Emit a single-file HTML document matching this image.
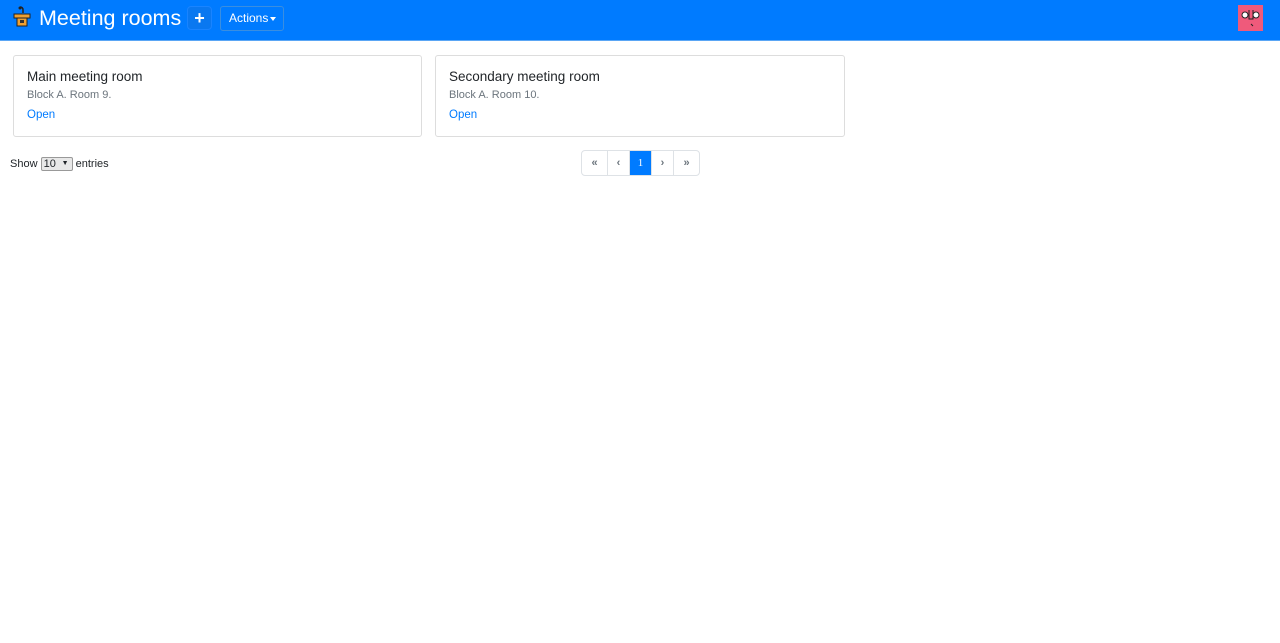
<!DOCTYPE html>
<html><head><style>
body{margin:0;font-family:"Liberation Sans",sans-serif;background:#fff;color:#212529;}
.nav{height:41px;background:#007bff;position:relative;border-bottom:1px solid #5aa6f5;box-sizing:border-box}
.logo{position:absolute;left:12px;top:6px}
.title{position:absolute;left:39px;top:6px;color:#fff;font-size:21.5px}
.plus{position:absolute;left:187px;top:6px;width:25px;height:24px;border:1px solid #1a84ff;border-radius:4px;background:#0a78f0;color:#fff;font-weight:bold;font-size:18px;text-align:center;line-height:22px;box-sizing:border-box}
.act{position:absolute;left:220px;top:6px;width:64px;height:25px;border:1px solid #3a8ee0;border-radius:3px;color:#fff;font-size:12px;line-height:23px;box-sizing:border-box;padding-left:8px}
.act .c{position:absolute;left:49px;top:10px;border-left:3px solid transparent;border-right:3px solid transparent;border-top:4px solid #fff}
.av{position:absolute;left:1238px;top:5px;width:25px;height:26px;background:#ef5a7b}
.card{position:absolute;top:55px;height:82px;border:1px solid #ddd;border-radius:3px;box-sizing:border-box;padding:13px 13px}
.card h5{margin:0;font-size:13.5px;font-weight:normal}
.card .s{color:#6c757d;font-size:11px;margin-top:5px}
.card a{display:block;color:#007bff;font-size:11.5px;margin-top:8px;text-decoration:none}
.show{position:absolute;left:10px;top:157px;font-size:11px}
.show span.sel{display:inline-block;width:28px;height:12px;border:1px solid #999;background:#e8e8e8;font-size:11px;line-height:12px;padding-left:2px;vertical-align:middle;position:relative;border-radius:2px}
.pg{position:absolute;left:581px;top:150px;display:flex;border:1px solid #dee2e6;border-radius:4px;height:24px}
.pg div{width:21px;text-align:center;line-height:24px;font-size:11px;color:#6c757d;border-left:1px solid #dee2e6;font-weight:bold}
.pg div:first-child{border-left:0;width:25px}
.pg .on{background:#007bff;color:#fff;font-weight:normal;font-family:"Liberation Serif",serif}
</style></head><body>
<div class="nav">
<svg class="logo" width="20" height="22" viewBox="0 0 20 22"><path d="M8 1 q3 0 3 3 v3" stroke="#222" stroke-width="1.5" fill="none"/><circle cx="8" cy="2" r="1.5" fill="#222"/><rect x="2" y="8" width="16" height="4" fill="#f0a030" stroke="#222"/><rect x="5" y="12" width="10" height="8" fill="#f0a030" stroke="#222"/><rect x="8" y="14" width="4" height="3" fill="#333"/></svg>
<div class="title">Meeting rooms</div>
<div class="plus">+</div>
<div class="act">Actions<span class="c"></span></div>
<div class="av"><svg width="25" height="26"><circle cx="7" cy="10" r="3" fill="#fff" stroke="#222"/><circle cx="18" cy="10" r="3" fill="#fff" stroke="#222"/><path d="M11 5v9h4V5" stroke="#222" fill="none"/><path d="M13 19l2 2" stroke="#222"/></svg></div>
</div>
<div class="card" style="left:13px;width:409px"><h5>Main meeting room</h5><div class="s">Block A. Room 9.</div><a>Open</a></div>
<div class="card" style="left:435px;width:410px"><h5>Secondary meeting room</h5><div class="s">Block A. Room 10.</div><a>Open</a></div>
<div class="show">Show <span class="sel">10 <span style="position:absolute;right:3px;font-size:7px">▼</span></span> entries</div>
<div class="pg"><div>«</div><div>‹</div><div class="on">1</div><div>›</div><div style="width:25px">»</div></div>
</body></html>
